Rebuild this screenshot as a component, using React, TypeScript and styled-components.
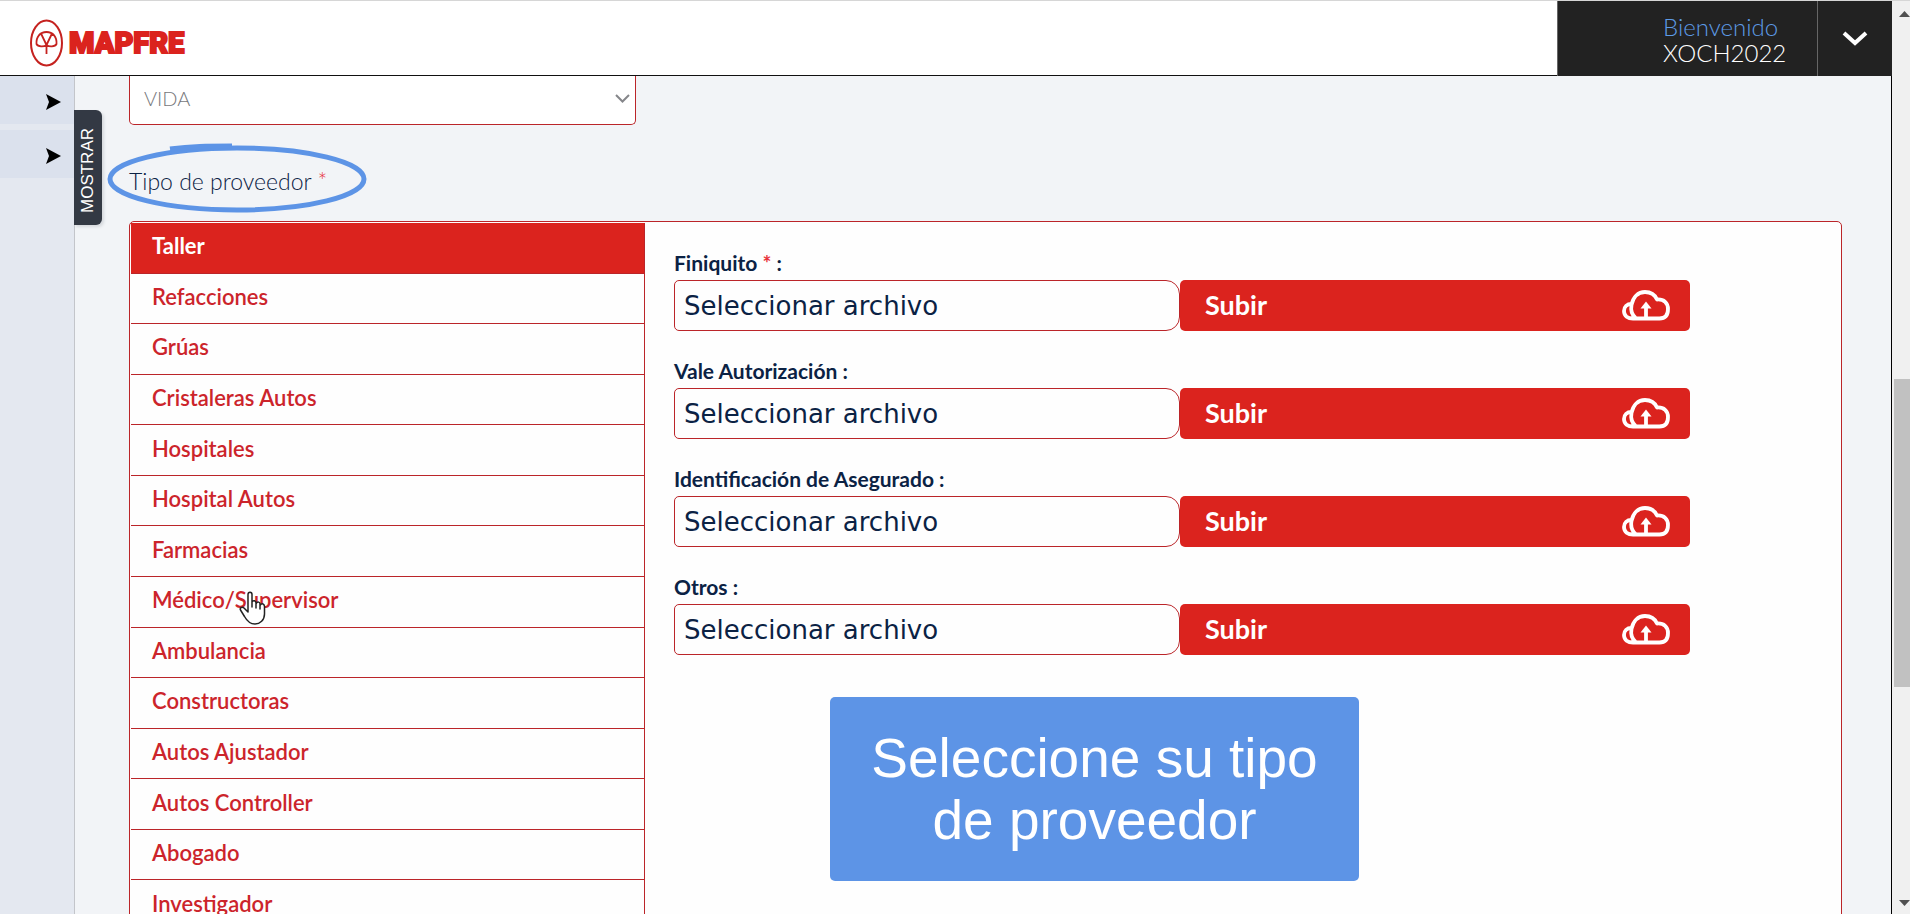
import React from "react";
import styled, { createGlobalStyle } from "styled-components";

const RED = "#db231e";
const LINE = "#bb2529";
const NAVY = "#0b2244";
const BLUE = "#5d94e6";

const Global = createGlobalStyle`
  * { box-sizing: border-box; }
  html, body { margin: 0; padding: 0; overflow: hidden; }
  body { font-family: Lato, sans-serif; background: #f2f4f7; color: ${NAVY}; }
  button, input, select { font: inherit; margin: 0; }
`;

const Page = styled.div`
  display: flex;
  height: 100vh;
  overflow: hidden;
  border-top: 1px solid #d6d6d6;
`;
const Screen = styled.div`
  flex: 1;
  min-width: 0;
  display: flex;
  flex-direction: column;
`;
const Header = styled.header`
  flex: none;
  display: flex;
  justify-content: space-between;
  height: 75px;
  background: #fff;
  border-bottom: 1px solid #111;
`;
const Brand = styled.a`
  display: flex;
  align-items: center;
  gap: 6px;
  padding: 10px 0 0 30px;
  text-decoration: none;
`;
const UserArea = styled.div`
  display: flex;
  width: 335px;
  height: 75px;
  background: #222;
  border-left: 1px solid #666;
`;
const Greeting = styled.p`
  flex: 1;
  margin: 0;
  padding: 13px 0 0 105px;
  font-size: 24px;
  line-height: 26px;
  font-weight: 300;
  color: #fff;
`;
const Welcome = styled.span`
  display: block;
  color: #5d9be6;
`;
const MenuButton = styled.button`
  width: 75px;
  padding: 0;
  border: 0;
  border-left: 1px solid #666;
  background: none;
  display: grid;
  place-items: center;
`;
const Body = styled.div`
  flex: 1;
  min-height: 0;
  display: flex;
  border-right: 1px solid #000;
`;
const Sidebar = styled.nav`
  flex: none;
  position: relative;
  width: 75px;
  display: flex;
  flex-direction: column;
  gap: 6px;
  background: #e4e8f0;
  border-right: 1px solid #c3c5ca;
`;
const SideItem = styled.button`
  height: 48px;
  padding: 4px 13px 0 0;
  border: 0;
  background: #dbe1ed;
  display: flex;
  align-items: center;
  justify-content: flex-end;
`;
const ShowTab = styled.button`
  position: absolute;
  left: 74px;
  top: 34px;
  width: 28px;
  height: 115px;
  padding: 6px 0 0;
  border: 0;
  border-radius: 0 6px 6px 0;
  background: #333944;
  color: #fff;
  box-shadow: 2px 2px 3px #d5d8dd;
  font: 17px/28px "Liberation Sans", sans-serif;
  writing-mode: vertical-rl;
`;
const Label90 = styled.span`
  display: block;
  transform: rotate(180deg);
`;
const Main = styled.main`
  flex: 1;
  min-width: 0;
  padding: 0 49px 0 54px;
  overflow: hidden;
`;
const LineSelectBox = styled.div`
  position: relative;
  width: 507px;
`;
const LineSelect = styled.select`
  display: block;
  width: 100%;
  height: 49px;
  padding: 0 14px 4px;
  border: 1px solid ${LINE};
  border-top: 0;
  border-radius: 0 0 5px 5px;
  background: #fff;
  color: #77787c;
  font-size: 20px;
  font-weight: 300;
  appearance: none;
  opacity: 1;
`;
const SelectArrow = styled.svg`
  position: absolute;
  right: 6px;
  top: 18px;
  pointer-events: none;
`;
const Heading = styled.h2`
  position: relative;
  margin: 40px 0 24px;
  font-size: 23px;
  line-height: 32px;
  font-weight: 300;
`;
const Required = styled.span`
  color: #e8323a;
`;
const Ring = styled.svg`
  position: absolute;
  left: -22px;
  top: -24px;
  overflow: visible;
`;
const Panel = styled.section`
  position: relative;
  display: flex;
  align-items: flex-start;
  padding: 1px;
  border: 1px solid ${LINE};
  border-radius: 5px 5px 0 0;
  background: #fefefe;
`;
const ProviderList = styled.div`
  flex: none;
  width: 514px;
  height: 708px;
  display: grid;
  grid-auto-rows: 1fr;
  border-right: 1px solid ${LINE};
`;
const Provider = styled.button<{ $active?: boolean }>`
  padding: 0 0 3px 21px;
  border: 0;
  border-bottom: 1px solid ${LINE};
  background: ${(p) => (p.$active ? RED : "#fefefe")};
  color: ${(p) => (p.$active ? "#fff" : "#cc242b")};
  font-size: 22px;
  line-height: 26px;
  font-weight: ${(p) => (p.$active ? 700 : 600)};
  text-align: left;
`;
const Uploads = styled.form`
  flex: 1;
  padding: 28px 150px 0 29px;
  display: flex;
  flex-direction: column;
  gap: 28px;
`;
const Field = styled.div`
  display: flex;
  flex-direction: column;
`;
const FieldLabel = styled.label`
  font-size: 21px;
  line-height: 24px;
  font-weight: 700;
  padding-bottom: 5px;
`;
const FileRow = styled.div`
  display: grid;
  grid-template-columns: 506fr 510fr;
  height: 51px;
`;
const FileName = styled.input`
  min-width: 0;
  padding: 1px 9px 0;
  border: 1px solid ${LINE};
  border-radius: 5px 14px 14px 5px;
  background: #fefefe;
  color: ${NAVY};
  font-family: "DejaVu Sans", sans-serif;
  font-size: 26px;
`;
const UploadButton = styled.button`
  display: flex;
  align-items: center;
  justify-content: space-between;
  padding: 0 20px 0 25px;
  border: 0;
  border-radius: 5px;
  background: ${RED};
  color: #fff;
  font-size: 27px;
  line-height: 32px;
  font-weight: 700;
`;
const UploadText = styled.span`
  padding-bottom: 2px;
`;
const Callout = styled.aside`
  position: absolute;
  left: 700px;
  top: 475px;
  width: 529px;
  height: 184px;
  display: grid;
  place-items: center;
  border-radius: 5px;
  background: ${BLUE};
  color: #fff;
  font: 55px/62px "Liberation Sans", sans-serif;
  text-align: center;
`;
const Pointer = styled.svg`
  position: absolute;
  left: 109px;
  top: 369px;
`;
const ScrollTrack = styled.div`
  flex: none;
  width: 18px;
  background: #f0f0f0;
  padding: 10px 0 8px 2px;
  display: flex;
  flex-direction: column;
`;
const ScrollThumb = styled.div`
  flex: none;
  height: 308px;
  margin: 362px 0 auto;
  background: #c1c1c1;
`;
const ScrollArrow = styled.svg`
  flex: none;
  margin-left: 5px;
`;

const providers = [
  "Taller", "Refacciones", "Grúas", "Cristaleras Autos", "Hospitales",
  "Hospital Autos", "Farmacias", "Médico/Supervisor", "Ambulancia",
  "Constructoras", "Autos Ajustador", "Autos Controller", "Abogado", "Investigador",
];
const files = [
  { id: "finiquito", label: "Finiquito", required: true },
  { id: "vale", label: "Vale Autorización" },
  { id: "identificacion", label: "Identificación de Asegurado" },
  { id: "otros", label: "Otros" },
];

const BrandName = styled.span`
  color: ${RED};
  font: 900 29px/36px Roboto, "Liberation Sans", sans-serif;
  -webkit-text-stroke: 2px ${RED};
`;

const Emblem = () => (
  <svg width="33" height="48" viewBox="0 0 33 48" fill="none" stroke="#c5221f">
    <ellipse cx="16.500" cy="24" rx="15.500" ry="22.500" strokeWidth="2" />
    <path strokeWidth="1.8" d="M16.500 35V26M16.500 26L11 14.500M16.500 26L22 14.500M6.500 25C6 18 10 13 16.500 13C23 13 27 18 26.500 25C25 28 19 28 16.500 26C14 28 8 28 6.500 25Z" />
  </svg>
);
const SideArrow = () => (
  <svg width="15" height="16" viewBox="0 0 15 16"><path d="M0 0L15 8L0 16L3 8Z" fill="#000" /></svg>
);
const CloudUp = () => (
  <svg width="48" height="31" viewBox="0 0 48 31" fill="none" stroke="#fff" strokeWidth="3.800" strokeLinejoin="round">
    <path d="M11 28.500C6 28.500 2 26 2 21C2 16.500 5 14 9.500 14M14 28.500C10 25 8.500 20 9.500 15C11 7 16 2 23 2C29 2 33 5 35 9.500C42 9 46 13 46 19C46 25 43 28.500 37.500 28.500H11" />
    <path d="M24 28V15" />
    <path d="M18.500 18.500L24 11.500L29.500 18.500Z" fill="#fff" stroke="none" />
  </svg>
);

export default function App() {
  return (
    <>
      <Global />
      <Page>
        <Screen>
          <Header>
            <Brand href="#" aria-label="MAPFRE">
              <Emblem />
              <BrandName>MAPFRE</BrandName>
            </Brand>
            <UserArea>
              <Greeting><Welcome>Bienvenido</Welcome>XOCH2022</Greeting>
              <MenuButton type="button" aria-label="Menú">
                <svg width="26" height="16" viewBox="0 0 26 16" fill="none" stroke="#fff" strokeWidth="4"><path d="M2 2L13 12L24 2" /></svg>
              </MenuButton>
            </UserArea>
          </Header>
          <Body>
            <Sidebar>
              <SideItem type="button" aria-label="Abrir menú 1"><SideArrow /></SideItem>
              <SideItem type="button" aria-label="Abrir menú 2"><SideArrow /></SideItem>
              <ShowTab type="button"><Label90>MOSTRAR</Label90></ShowTab>
            </Sidebar>
            <Main>
              <LineSelectBox>
                <LineSelect aria-label="Ramo" defaultValue="VIDA"><option>VIDA</option></LineSelect>
                <SelectArrow width="15" height="10" viewBox="0 0 15 10" fill="none" stroke="#85868a" strokeWidth="2"><path d="M1 1L7.500 7.500L14 1" /></SelectArrow>
              </LineSelectBox>
              <Heading>
                Tipo de proveedor <Required>*</Required>
                <Ring width="260" height="70" viewBox="0 0 260 70" fill="none" stroke={BLUE} strokeWidth="5">
                  <ellipse cx="130" cy="38" rx="127" ry="31" />
                  <path d="M63 8C85 5 100 5 125 5" />
                </Ring>
              </Heading>
              <Panel>
                <ProviderList>
                  {providers.map((name, i) => (
                    <Provider key={name} type="button" $active={i === 0} aria-pressed={i === 0}>{name}</Provider>
                  ))}
                </ProviderList>
                <Uploads>
                  {files.map((f) => (
                    <Field key={f.id}>
                      <FieldLabel htmlFor={f.id}>{f.label} {f.required && <><Required>*</Required> </>}:</FieldLabel>
                      <FileRow>
                        <FileName id={f.id} readOnly value="Seleccionar archivo" />
                        <UploadButton type="button"><UploadText>Subir</UploadText><CloudUp /></UploadButton>
                      </FileRow>
                    </Field>
                  ))}
                </Uploads>
                <Callout><span>Seleccione su tipo<br />de proveedor</span></Callout>
                <Pointer width="27" height="34" viewBox="0 0 27 34" fill="#fff" stroke="#222" strokeWidth="1.500" strokeLinejoin="round">
                  <path d="M9 21V3.500C9 .5 13 .5 13 3.500V16V11C14 9 17 9.500 17 12V17V13C18.500 10 21 11 21 13V18V14.500C23 11.500 25.500 13 25.500 15.500V23C25.500 29 21 33 16 33C11 33 8 30 5.500 25.500L1.500 19C.5 17 3 15.500 5 17Z" />
                </Pointer>
              </Panel>
            </Main>
          </Body>
        </Screen>
        <ScrollTrack aria-hidden="true">
          <ScrollArrow width="11" height="6" viewBox="0 0 11 6"><path d="M0 6L5.500 0L11 6Z" fill="#505050" /></ScrollArrow>
          <ScrollThumb />
          <ScrollArrow width="11" height="6" viewBox="0 0 11 6"><path d="M0 0L5.500 6L11 0Z" fill="#505050" /></ScrollArrow>
        </ScrollTrack>
      </Page>
    </>
  );
}
